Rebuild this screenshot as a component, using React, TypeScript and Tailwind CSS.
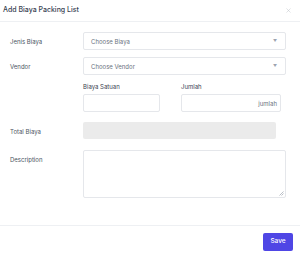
import { X } from 'lucide-react';

const Label = ({ children }: { children: string }) => (
  <div className="w-[73px] shrink-0 pt-[5px] text-[6px] text-[#4b5563]">{children}</div>
);

const Select = ({ placeholder }: { placeholder: string }) => (
  <div className="flex h-[18px] w-[203px] items-center justify-between rounded-[2px] border border-[#e5e7eb] bg-white pl-[7px] pr-[8px]">
    <span className="text-[6px] text-[#6b7280]">{placeholder}</span>
    <span className="text-[4px] leading-none text-[#9ca3af]">▼</span>
  </div>
);

export default function App() {
  return (
    <div className="h-[262px] w-[300px] bg-white font-['Inter',sans-serif]">
      {/* Header */}
      <div className="flex h-[22px] items-center justify-between border-b border-[#eef0f3] pl-[3px] pr-[8px]">
        <span className="text-[7px] font-medium text-[#374151]">Add Biaya Packing List</span>
        <X size={7} className="text-[#b8bcc4]" strokeWidth={1.5} />
      </div>

      {/* Body */}
      <div className="flex h-[204px] flex-col gap-[7px] border-b border-[#eef0f3] pl-[10px] pt-[10px]">
        <div className="flex">
          <Label>Jenis Biaya</Label>
          <Select placeholder="Choose Biaya" />
        </div>
        <div className="flex">
          <Label>Vendor</Label>
          <Select placeholder="Choose Vendor" />
        </div>
        <div className="flex">
          <div className="w-[73px] shrink-0" />
          <div className="flex gap-[21px]">
            <div className="flex flex-col gap-[3px]">
              <span className="text-[6px] text-[#374151]">Biaya Satuan</span>
              <div className="h-[18px] w-[77px] rounded-[2px] border border-[#e5e7eb] bg-white" />
            </div>
            <div className="flex flex-col gap-[3px]">
              <span className="text-[6px] text-[#374151]">Jumlah</span>
              <div className="flex h-[18px] w-[100px] items-center justify-end rounded-[2px] border border-[#e5e7eb] bg-white pr-[3px]">
                <span className="text-[6px] text-[#6b7280]">jumlah</span>
              </div>
            </div>
          </div>
        </div>
        <div className="flex pt-[3px]">
          <Label>Total Biaya</Label>
          <div className="h-[17px] w-[193px] rounded-[2px] bg-[#ebebeb]" />
        </div>
        <div className="flex pt-[4px]">
          <Label>Description</Label>
          <div className="relative h-[48px] w-[203px] rounded-[2px] border border-[#e5e7eb] bg-white">
            <svg className="absolute bottom-[1px] right-[1px]" width="5" height="5" viewBox="0 0 5 5">
              <path d="M4.5 0.5 L0.5 4.5 M4.5 2.5 L2.5 4.5" stroke="#9ca3af" strokeWidth="0.7" />
            </svg>
          </div>
        </div>
      </div>

      {/* Footer */}
      <div className="flex justify-end pr-[7px] pt-[7px]">
        <button className="flex h-[18px] w-[30px] items-center justify-center rounded-[2px] bg-[#4f46e5] text-[6.5px] font-medium text-white">
          Save
        </button>
      </div>
    </div>
  );
}
